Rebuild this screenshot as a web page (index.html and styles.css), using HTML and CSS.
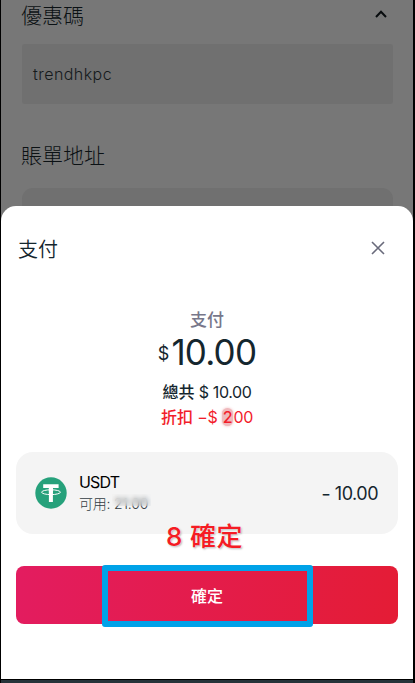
FILE: index.html
```html
<!DOCTYPE html>
<html lang="zh-Hant">
<head>
<meta charset="utf-8">
<meta name="viewport" content="width=device-width">
<title>支付</title>
<link rel="stylesheet" href="styles.css">
</head>
<body>
<div class="screen">
  <main class="page">
    <header class="section-head">
      <h2>優惠碼</h2>
      <svg class="chevron" viewBox="0 0 12 8"><path d="M1 7 6 1.8 11 7"/></svg>
    </header>
    <div class="field"><span>trendhkpc</span></div>
    <h2 class="address">賬單地址</h2>
    <div class="field field-next"></div>
  </main>
  <section class="sheet">
    <header class="sheet-head">
      <h1>支付</h1>
      <svg class="close" viewBox="0 0 14 14"><path d="M1 1 13 13M13 1 1 13"/></svg>
    </header>
    <div class="summary">
      <div class="label">支付</div>
      <div class="amount"><span class="currency">$</span><span class="value">10.00</span></div>
      <div class="total">總共 <span class="num">$ 10.00</span></div>
      <div class="discount">折扣 <span class="num">−$ <span class="digit">2</span>00</span></div>
    </div>
    <div class="card">
      <svg class="coin" viewBox="0 0 32 32">
        <circle cx="16" cy="16" r="15.7" fill="#26a17b"/>
        <path d="M8.2 7.3H23.6V11.1H17.9V25H13.9V11.1H8.2Z" fill="#fff"/>
        <ellipse cx="16" cy="15.2" rx="9.4" ry="2.4" fill="none" stroke="#fff" stroke-width="1"/>
        <path d="M13.9 11.1h4v5.5q-2 .2-4 0Z" fill="#fff"/>
      </svg>
      <div class="asset">
        <div class="name">USDT</div>
        <div class="available">可用: <span class="balance">21.00</span></div>
      </div>
      <div class="debit"><span class="minus">−</span> 10.00</div>
      <div class="step">8 確定</div>
    </div>
    <button class="confirm">確定<span class="highlight"></span></button>
  </section>
  <footer class="bottom"></footer>
</div>
</body>
</html>
```
FILE: styles.css
```css
* { box-sizing: border-box; }
body { margin: 0; background: #000; font-family: Inter, "Noto Sans CJK TC", sans-serif; overflow: hidden; }
h1, h2 { margin: 0; font-weight: 300; }
.screen { width: 415px; height: 683px; display: flex; flex-direction: column; background: linear-gradient(#777, #777) 1px 0 / 412px 240px no-repeat #000; }
.page { height: 206px; flex: none; margin: 0 2px 0 1px; padding: 0 20px 0 21px; overflow: hidden; color: #0b1114; }
.section-head { height: 44px; display: flex; justify-content: space-between; align-items: flex-start; }
h2 { font-size: 21px; line-height: 31px; margin-left: -1px; }
.chevron { width: 12px; height: 8px; margin: 10px 6px 0 0; fill: none; stroke: #080c0e; stroke-width: 2; }
.field { height: 60px; padding: 0 11px; display: flex; align-items: center; background: #707070; border-radius: 3px; font-size: 16px; font-weight: 300; letter-spacing: .45px; color: #151a1c; }
.address { margin-top: 36px; height: 48px; }
.field-next { border-radius: 11px; }
.sheet { height: 473px; flex: none; margin: 0 2px 0 1px; padding: 0 15px; display: flex; flex-direction: column; background: #fff; border-radius: 15px 15px 0 0; color: #14262e; }
.sheet-head { height: 84px; display: flex; justify-content: space-between; align-items: center; padding: 0 13px 0 2px; }
h1 { font-size: 20px; font-weight: 350; }
.close { width: 14px; height: 14px; fill: none; stroke: #696a7b; stroke-width: 1.6; }
.summary { height: 162px; padding-top: 15px; text-align: center; }
.label { height: 27px; line-height: 30px; font-size: 17px; font-weight: 500; color: #77778a; }
.amount { height: 40px; margin-bottom: 8px; display: flex; justify-content: center; align-items: center; gap: 2px; }
.currency { font-size: 18px; padding-top: 2px; }
.value { font-size: 35px; letter-spacing: -.8px; }
.total, .discount { height: 25px; line-height: 25px; font-size: 16px; font-weight: 500; }
.num { font-weight: 400; letter-spacing: -.4px; }
.discount { color: #f21d2b; }
.discount .num { letter-spacing: -.25px; }
.digit { position: relative; display: inline-block; padding: 0 1px; line-height: 18px; font-weight: 500; border-radius: 7px; background: #efb9bc; box-shadow: 0 0 3px #efb9bc; }
.card { position: relative; height: 82px; padding: 0 20px 0 19px; display: flex; align-items: center; background: #f4f4f4; border-radius: 17px; }
.coin { width: 32px; height: 32px; margin-right: 12px; }
.asset { flex: 1; }
.name { height: 21px; line-height: 20px; font-size: 16px; color: #000; letter-spacing: -.8px; }
.available { height: 21px; line-height: 21px; font-size: 14px; font-weight: 300; color: #333c42; letter-spacing: -.2px; }
.balance { position: relative; display: inline-block; }
.balance::after { content: ""; position: absolute; left: -2px; right: -3px; top: 1px; height: 12px; backdrop-filter: blur(2.5px); }
.debit { font-size: 18px; letter-spacing: -.5px; }
.minus { display: inline-block; transform: scaleX(.8); transform-origin: right; }
.step { position: absolute; left: 150px; top: 66px; font-size: 26px; line-height: 38px; font-weight: 500; color: #f51c24; letter-spacing: .4px; text-shadow: 0 0 2px #fff, 1px 1px 2px #aaa; white-space: nowrap; }
.confirm { position: relative; height: 58px; flex: none; margin-top: 32px; border: 0; border-radius: 8px; background: linear-gradient(100deg, #e31c60, #e41c35); color: #fff; font: 500 16px Inter, "Noto Sans CJK TC", sans-serif; }
.highlight { position: absolute; left: 86px; top: -1px; width: 211px; height: 62px; border: 6px solid #00a2e8; border-radius: 3px; }
.bottom { height: 3px; margin: 1px 2px 0 1px; background: #26343a; }
```
